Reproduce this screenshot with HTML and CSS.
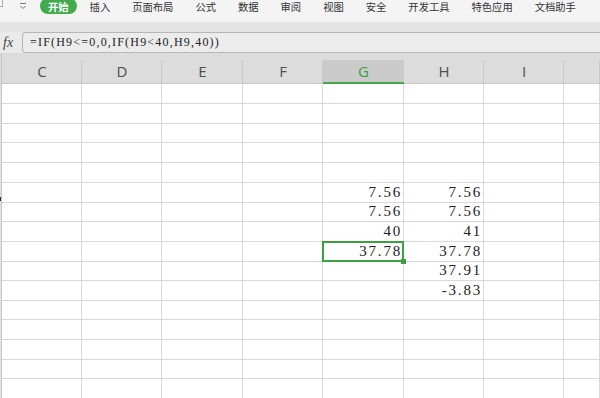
FILE: index.html
```html
<!DOCTYPE html>
<html lang="zh-CN">
<head>
<meta charset="UTF-8" />
<title>表格 - 公式</title>
<link rel="stylesheet" href="styles.css">
</head>
<body>

	<div class="tabs">
		<span class="corner"></span>
		<svg class="qa" width="8" height="8" viewBox="0 0 8 8">
			<path d="M1 1.5H7M1.5 4L4 6.5L6.5 4" fill="none" stroke="#777" stroke-width="1" />
		</svg>
		<span class="tab on">开始</span>
		<span class="tab">插入</span>
		<span class="tab">页面布局</span>
		<span class="tab">公式</span>
		<span class="tab">数据</span>
		<span class="tab">审阅</span>
		<span class="tab">视图</span>
		<span class="tab">安全</span>
		<span class="tab">开发工具</span>
		<span class="tab">特色应用</span>
		<span class="tab">文档助手</span>
	</div>
	<div class="band"></div>
	<div class="fbar">
		<span class="fx">fx</span>
		<div class="fbox">=IF(H9&lt;=0,0,IF(H9&lt;40,H9,40))</div>
	</div>

	<div class="sheet">
		<div class="row head">
			<span class="rh"></span>
			<span class="cell">C</span>
			<span class="cell">D</span>
			<span class="cell">E</span>
			<span class="cell">F</span>
			<span class="cell act">G</span>
			<span class="cell">H</span>
			<span class="cell">I</span>
			<span class="cell"></span>
		</div>
		<div class="grid" id="grid"></div>
	</div>

<script>
	var grid = document.getElementById('grid'),
		data = {
			6: ['7.56', '7.56'],
			7: ['7.56', '7.56'],
			8: ['40', '41'],
			9: ['37.78', '37.78'],
			10: ['', '37.91'],
			11: ['', '-3.83']
		};

	for (var r = 1; r <= 16; r++) {
		var vals = data[r] || ['', ''],
			html = '<span class="rh' + (r == 6 ? ' mark' : '') + '"></span>';
		for (var c = 0; c < 8; c++) {
			var text = '';
			if (c == 4) text = vals[0];
			if (c == 5) text = vals[1];
			html += '<span class="cell' + (c == 4 && r == 9 ? ' sel' : '') + '">' + text + '</span>';
		}
		var row = document.createElement('div');
		row.className = 'row';
		row.innerHTML = html;
		grid.appendChild(row);
	}
</script>
</body>
</html>
```

FILE: styles.css
```css
html, body {
	margin: 0;
	padding: 0;
}
body {
	width: 600px;
	height: 398px;
	overflow: hidden;
	background-color: #fff;
	font-family: "Noto Sans CJK SC", sans-serif;
}
.tabs {
	display: flex;
	align-items: flex-start;
	height: 22px;
	background-color: #f4f4f4;
	font-size: 10.3px;
	line-height: 14px;
	color: #333;
	overflow: hidden;
}
.tabs .corner {
	width: 2px;
	height: 6px;
	margin-top: 0;
	border-right: 1px solid #aaa;
	border-bottom: 1px solid #aaa;
}
.tabs .qa {
	margin: 2px 0 0 16px;
}
.tab {
	padding: 0 11px;
	white-space: nowrap;
}
.tab.on {
	height: 16px;
	line-height: 18px;
	margin: -2px 2px 0 13px;
	padding: 0 8px;
	border-radius: 8px;
	background-color: #43ab4c;
	color: #fff;
	font-weight: bold;
}
.band {
	height: 10px;
	background-color: #e4e4e4;
}
.fbar {
	display: flex;
	height: 21px;
	background-color: #eaeaea;
}
.fx {
	width: 22px;
	padding-left: 3px;
	box-sizing: border-box;
	font-family: "Liberation Serif", serif;
	font-style: italic;
	font-size: 14px;
	line-height: 21px;
	color: #444;
}
.fbox {
	flex: 1;
	border: 1px solid #b6b6b6;
	border-right: 0;
	border-radius: 4px 0 0 4px;
	padding-left: 7px;
	font-family: "Liberation Serif", serif;
	font-size: 12px;
	letter-spacing: 1.2px;
	line-height: 19px;
	color: #222;
	background-color: #ececec;
}
.row {
	display: grid;
	grid-template-columns: 2px 80px 80px 81px 80px 81px 80px 80px 1fr;
	height: 20px;
}
.grid .row:nth-child(3n) {
	height: 19px;
}
.rh {
	box-sizing: border-box;
	background-color: #e2e2e2;
	border-right: 1px solid #c4c4c4;
}
.rh.mark {
	background: linear-gradient(#333, #333) 0 14px / 1px 4px no-repeat, #e2e2e2;
}
.cell {
	box-sizing: border-box;
	border-right: 1px solid #d9d9d9;
	border-bottom: 1px solid #d9d9d9;
	padding-right: 1px;
	text-align: right;
	font-family: "Liberation Serif", serif;
	font-size: 15px;
	letter-spacing: 1.8px;
	line-height: 19px;
	color: #222;
}
.cell.sel {
	position: relative;
}
.cell.sel:after {
	position: absolute;
	left: -1px;
	top: -1px;
	right: -1px;
	bottom: -1px;
	border: 2px solid #3c9f41;
	content: "";
}
.cell.sel:before {
	position: absolute;
	right: -3px;
	bottom: -3px;
	width: 5px;
	height: 5px;
	background-color: #3c9f41;
	z-index: 1;
	content: "";
}
.head {
	height: 31px;
	background-color: #dcdcdc;
}
.head .rh {
	background-color: #dcdcdc;
	border-right-color: #c4c4c4;
}
.head .cell {
	border: 0;
	border-bottom: 1px solid #c8c8c8;
	padding: 7px 0 0;
	text-align: center;
	font-family: "Open Sans", sans-serif;
	font-size: 15px;
	letter-spacing: 0;
	line-height: 23px;
	color: #4d4d4d;
	background: linear-gradient(#c9c9c9, #c9c9c9) right 7px / 1px 24px no-repeat, #dcdcdc;
}
.head .cell.act {
	color: #3c9f41;
	border-bottom: 2px solid #45a84a;
	background: linear-gradient(#cacaca, #cacaca) 0 7px / 100% 24px no-repeat, #dcdcdc;
	line-height: 22px;
}
```
